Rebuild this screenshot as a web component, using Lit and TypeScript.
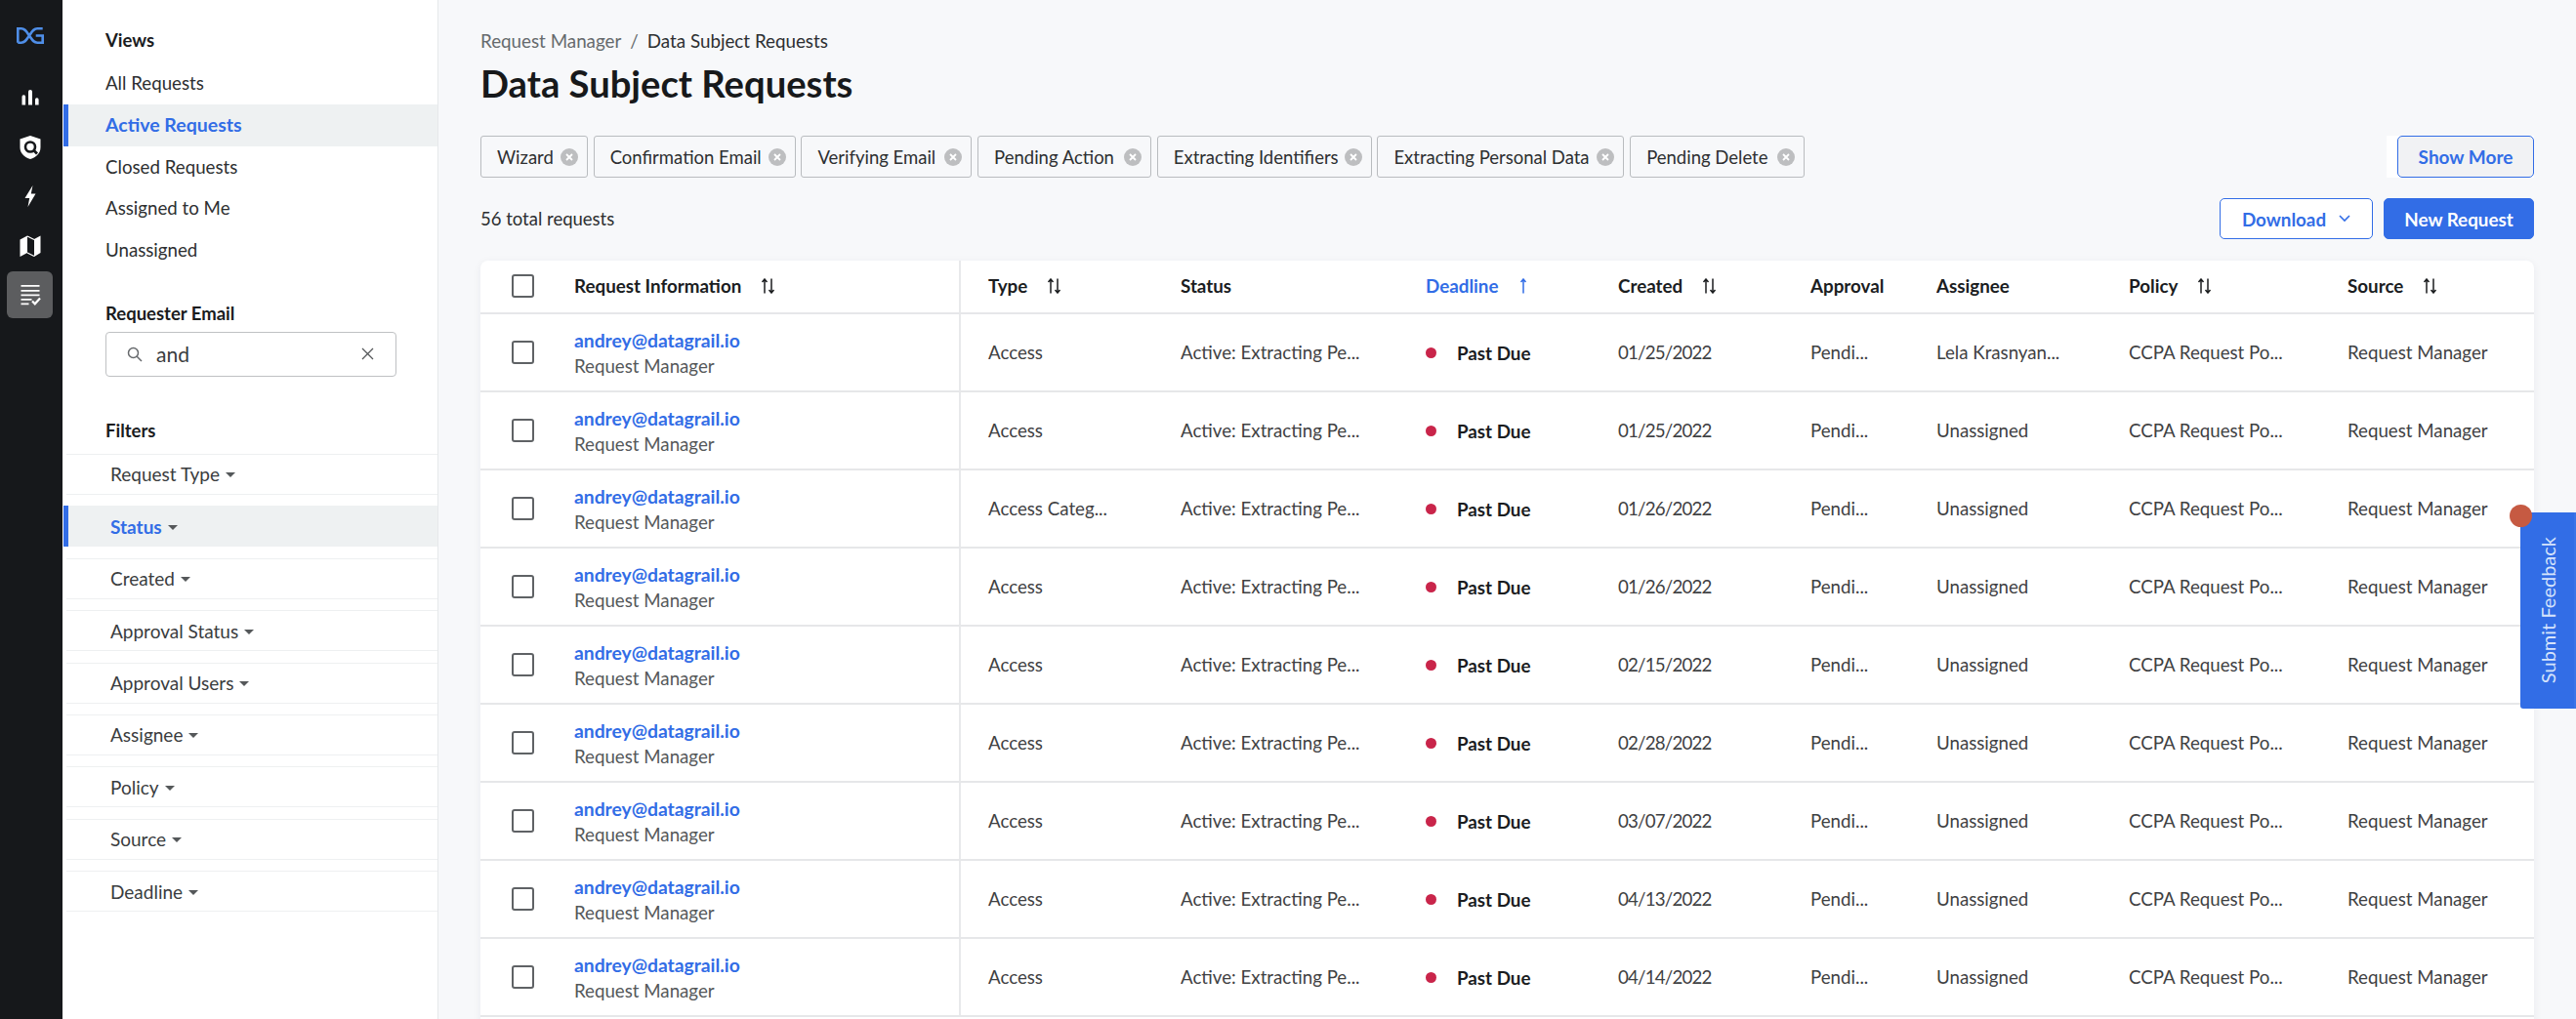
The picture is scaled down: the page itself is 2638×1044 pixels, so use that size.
import { LitElement, css, html, svg } from "lit";
import { customElement } from "lit/decorators.js";

const views = ["All Requests", "Active Requests", "Closed Requests", "Assigned to Me", "Unassigned"];
const filters = ["Request Type", "Status", "Created", "Approval Status", "Approval Users", "Assignee", "Policy", "Source", "Deadline"];
const chips = [
  ["Wizard", 110],
  ["Confirmation Email", 207],
  ["Verifying Email", 175],
  ["Pending Action", 178],
  ["Extracting Identifiers", 220],
  ["Extracting Personal Data", 253],
  ["Pending Delete", 179],
] as const;

const columns = [
  { label: "Request Information", sort: true, cls: "info" },
  { label: "Type", sort: true, cls: "type" },
  { label: "Status", sort: false, cls: "" },
  { label: "Deadline", sort: false, cls: "deadline" },
  { label: "Created", sort: true, cls: "" },
  { label: "Approval", sort: false, cls: "" },
  { label: "Assignee", sort: false, cls: "" },
  { label: "Policy", sort: true, cls: "" },
  { label: "Source", sort: true, cls: "" },
];

const rows = [
  { type: "Access", created: "01/25/2022", assignee: "Lela Krasnyan..." },
  { type: "Access", created: "01/25/2022", assignee: "Unassigned" },
  { type: "Access Categ...", created: "01/26/2022", assignee: "Unassigned" },
  { type: "Access", created: "01/26/2022", assignee: "Unassigned" },
  { type: "Access", created: "02/15/2022", assignee: "Unassigned" },
  { type: "Access", created: "02/28/2022", assignee: "Unassigned" },
  { type: "Access", created: "03/07/2022", assignee: "Unassigned" },
  { type: "Access", created: "04/13/2022", assignee: "Unassigned" },
  { type: "Access", created: "04/14/2022", assignee: "Unassigned" },
];

// all rail icons share a 24 box, centred on the rail
const railIcons = [
  svg`<path fill="#fff" d="M3.500 11a1.800 1.800 0 0 1 3.600 0v8.500H3.500zM10 6a2 2 0 0 1 4 0v13.500h-4zM17 14a1.800 1.800 0 0 1 3.600 0v5.500H17z"/>`,
  svg`<path fill="#fff" d="M12 0l10.500 3.500v8.500c0 6-4.500 10-10.500 12C6 22 1.500 18 1.500 12V3.500z"/><circle cx="12" cy="11.500" r="5" fill="none" stroke="#16181b" stroke-width="2.600"/><path d="M15.500 15l3.500 3.500" stroke="#16181b" stroke-width="2.800"/>`,
  svg`<path fill="#fff" d="M14.500 1L6.500 14h4.700L9.500 23l8-13.500h-4.700z"/>`,
  svg`<path fill="#fff" d="M1.500 5.500L9 1.500v17.500l-7.500 4zM16 5l6.500-3.500V19L16 23z"/><path fill="none" stroke="#fff" stroke-width="1.200" d="M9 2l7 3.500M9 19l7 3.500"/>`,
  svg`<path fill="#fff" d="M2.500 2h19v1.800h-19zM2.500 7h19v1.800h-19zM2.500 11.500h19v1.800h-19zM2.500 16h11v1.800h-11zM2.500 20.400h8v1.800h-8z"/><path fill="none" stroke="#fff" stroke-width="2.200" d="M14 18.500l2.800 2.800 5.200-5.800"/>`,
];

const sortIcon = html`<svg class="sort" width="15" height="16" viewBox="0 0 15 16"><path d="M4 15.500V1M1.500 4L4 1l2.500 3M11 .5V15M8.500 12l2.500 3 2.500-3" fill="none" stroke="currentColor" stroke-width="1.500"/></svg>`;
const upIcon = html`<svg class="sort up" width="8" height="16" viewBox="0 0 8 16"><path d="M4 15.500V1M1.500 4L4 1l2.500 3" fill="none" stroke="currentColor" stroke-width="1.500"/></svg>`;
const caret = html`<svg class="caret" width="10" height="5" viewBox="0 0 10 5"><path d="M0 0h10L5 5z" fill="currentColor"/></svg>`;

@customElement("app-root")
export class AppRoot extends LitElement {
  static styles = css`
    :host {
      display: block;
      position: relative;
      height: 100vh;
      overflow: hidden;
      font-family: "Lato", "Liberation Sans", sans-serif;
      font-size: 18px;
      color: #2d2f31;
      background: #f7f8fa;
    }
    * { box-sizing: border-box; }
    .page { display: flex; height: 100%; }

    .rail {
      flex: 0 0 64px;
      background: #16181b;
      padding: 12px 3px 0 0;
      display: flex;
      flex-direction: column;
      align-items: center;
    }
    .logo { height: 48px; margin-bottom: 15px; display: flex; align-items: center; }
    .rail-item { width: 47px; height: 50.500px; display: flex; align-items: center; justify-content: center; }
    .rail-item.on { height: 48px; margin-top: 1px; background: #5c5d5f; border-radius: 6px; }

    .side {
      flex: 0 0 385px;
      background: #fff;
      border-right: 1px solid #e6e8eb;
      padding-top: 29px;
    }
    .side-title { height: 24px; line-height: 24px; margin-left: 44px; font-weight: 700; color: #1a1c1e; font-size: 18.500px; }
    .views { margin-top: 11px; }
    .view { height: 42.800px; line-height: 42.800px; padding-left: 43px; font-size: 18.700px; margin-left: 1px; }
    .view.on, .filter.on {
      background: #eef1f2;
      color: #326de6;
      font-weight: 700;
      border-left: 5px solid #326de6;
    }
    .view.on { padding-left: 38px; font-size: 19.500px; }
    .email-title { margin-top: 31px; }
    .search {
      margin: 7px 0 0 44px;
      width: 298px;
      height: 46px;
      background: #fff;
      border: 1px solid #bfc1c3;
      border-radius: 4px;
      display: flex;
      align-items: center;
      padding: 0 22px 0 21px;
      font-size: 21px;
      color: #3a3c3e;
    }
    .search span { flex: 1; margin-left: 14px; }
    .filters-title { margin-top: 43px; }
    .filters { margin-top: 12px; padding-left: 4px; }
    .filter {
      height: 42px;
      margin-bottom: 11.400px;
      border-top: 1px solid #eef0f1;
      border-bottom: 1px solid #eef0f1;
      padding-left: 45px;
      display: flex;
      align-items: center;
      gap: 6px;
      font-size: 19px;
      color: #3a3c3e;
    }
    .filter.on { border-top: 0; border-bottom: 0; margin-left: -3px; padding-left: 43px; }
    .caret { color: #55585a; margin-top: 2px; }

    .main { flex: 1; min-width: 0; padding: 30px 43px 0 43px; }
    .crumbs { height: 24px; line-height: 24px; font-size: 18.800px; color: #666a6d; }
    .crumbs i { font-style: normal; margin: 0 9px; }
    .crumbs b { font-weight: 400; color: #2d2f31; }
    h1 { margin: 7px 0 0; height: 48px; line-height: 48px; font-size: 38.200px; font-weight: 700; color: #17191b; }

    .chips-row { margin-top: 30px; height: 43px; display: flex; justify-content: space-between; }
    .chips { display: flex; gap: 5.700px; }
    .chip {
      height: 43px;
      border: 1px solid #b9bcbf;
      border-radius: 3px;
      padding: 0 9px 0 16px;
      display: flex;
      align-items: center;
      justify-content: space-between;
      font-size: 18.500px;
    }
    .more-wrap { background: #fff; padding-left: 11px; }
    .btn {
      height: 42px;
      border: 1px solid #326de6;
      border-radius: 5px;
      color: #326de6;
      font-weight: 700;
      font-size: 18.800px;
      display: flex;
      align-items: center;
      justify-content: center;
      gap: 13px;
      background: #fff;
    }
    .btn.more { width: 140px; height: 43px; background: #f1f2f4; font-size: 19px; }
    .btn.download { width: 157px; }
    .btn.primary { width: 154px; background: #326de6; color: #fff; }

    .toolbar { margin-top: 21px; height: 42px; display: flex; align-items: center; gap: 11px; }
    .total { flex: 1; font-size: 18.500px; }

    .table {
      margin-top: 22px;
      padding-bottom: 40px;
      background: #fff;
      border-radius: 8px 8px 0 0;
      box-shadow: 0 2px 10px rgba(30, 40, 60, .06);
    }
    .tr {
      display: grid;
      grid-template-columns: 96px 394px 227px 251px 197px 197px 129px 197px 224px 191px;
      height: 80px;
      align-items: center;
      border-bottom: 2px solid #e6e7e9;
      font-size: 18.700px;
      color: #3f4143;
    }
    .tr.head { height: 55px; font-weight: 700; font-size: 18.800px; color: #1b1d1f; }
    .tr.head .td { padding-bottom: 2px; }
    .td { white-space: nowrap; overflow: hidden; display: flex; align-items: center; height: 100%; }
    .td.type { border-left: 2px solid #e8e9eb; padding-left: 28px; }
    .th-deadline { color: #326de6; }
    .sort { margin-left: 20px; flex: none; }
    .sort.up { margin-left: 22px; }
    .check { justify-content: flex-start; padding-left: 32px; }
    .box { width: 23px; height: 24px; border: 2px solid #5f6265; border-radius: 3px; background: #fff; }
    .info-cell { flex-direction: column; align-items: flex-start; justify-content: center; gap: 4px; }
    .email { color: #326de6; font-weight: 700; font-size: 19.300px; }
    .origin { color: #55585a; }
    .dot { width: 11px; height: 11px; border-radius: 50%; background: #c9254a; margin-right: 21px; }
    .due { font-weight: 700; font-size: 18.800px; color: #1b1d1f; }
    .date { letter-spacing: -.8px; }

    .feedback {
      position: absolute;
      left: 2581px;
      top: 525px;
      width: 57px;
      height: 201px;
      background: #326de6;
      border-right: 2px solid #3a74e8;
      border-radius: 3px 0 0 3px;
      color: #d5e3fb;
      font-size: 20px;
      writing-mode: vertical-rl;
      display: flex;
      align-items: center;
      justify-content: center;
    }
    .feedback span { transform: rotate(180deg); }
    .pin {
      position: absolute;
      left: 2570px;
      top: 517px;
      width: 23px;
      height: 23px;
      border-radius: 50%;
      background: #c65a42;
    }
  `;

  render() {
    return html`
      <div class="page">
        <nav class="rail">
          <div class="logo">
            <svg width="28" height="17" viewBox="0 0 28 17" fill="none" stroke="#4f8ee8" stroke-width="2.600"><path d="M1.300 15.700V1.300h3.500c4 0 5.200 3 8.200 7.200s4.200 7.200 8.200 7.200h5.500V8.500h-7M1.300 15.700h3.500c4 0 5.200-3 8.200-7.200s4.200-7.200 8.200-7.200h5.500"/></svg>
          </div>
          ${railIcons.map((icon, i) => html`
            <div class="rail-item ${i === 4 ? "on" : ""}">
              <svg width="24" height="24" viewBox="0 0 24 24">${icon}</svg>
            </div>
          `)}
        </nav>

        <aside class="side">
          <div class="side-title">Views</div>
          <div class="views">
            ${views.map((v, i) => html`<div class="view ${i === 1 ? "on" : ""}">${v}</div>`)}
          </div>
          <div class="side-title email-title">Requester Email</div>
          <div class="search">
            <svg width="16" height="16" viewBox="0 0 16 16" fill="none" stroke="#66696c" stroke-width="1.500"><circle cx="6.500" cy="6.500" r="5"/><path d="M10.200 10.200L15 15"/></svg>
            <span>and</span>
            <svg width="13" height="13" viewBox="0 0 13 13" fill="none" stroke="#55585a" stroke-width="1.300"><path d="M1 1l11 11M12 1L1 12"/></svg>
          </div>
          <div class="side-title filters-title">Filters</div>
          <div class="filters">
            ${filters.map((f, i) => html`<div class="filter ${i === 1 ? "on" : ""}">${f}${caret}</div>`)}
          </div>
        </aside>

        <main class="main">
          <div class="crumbs">Request Manager<i>/</i><b>Data Subject Requests</b></div>
          <h1>Data Subject Requests</h1>

          <div class="chips-row">
            <div class="chips">
              ${chips.map(([label, width]) => html`
                <div class="chip" style="width:${width}px">
                  ${label}
                  <svg width="18" height="18" viewBox="0 0 18 18"><circle cx="9" cy="9" r="9" fill="#bdbec0"/><path d="M6 6l6 6M12 6l-6 6" stroke="#fff" stroke-width="1.800"/></svg>
                </div>
              `)}
            </div>
            <div class="more-wrap"><div class="btn more">Show More</div></div>
          </div>

          <div class="toolbar">
            <div class="total">56 total requests</div>
            <div class="btn download">
              Download
              <svg width="12" height="8" viewBox="0 0 12 8" fill="none" stroke="#326de6" stroke-width="1.600"><path d="M1 1l5 5 5-5"/></svg>
            </div>
            <div class="btn primary">New Request</div>
          </div>

          <div class="table">
            <div class="tr head">
              <div class="td check"><div class="box"></div></div>
              ${columns.map((c) => html`
                <div class="td ${c.cls === "type" ? "type" : ""} ${c.cls === "deadline" ? "th-deadline" : ""}">
                  ${c.label}${c.sort ? sortIcon : ""}${c.cls === "deadline" ? upIcon : ""}
                </div>
              `)}
            </div>
            ${rows.map((r) => html`
              <div class="tr">
                <div class="td check"><div class="box"></div></div>
                <div class="td info-cell">
                  <div class="email">andrey@datagrail.io</div>
                  <div class="origin">Request Manager</div>
                </div>
                <div class="td type">${r.type}</div>
                <div class="td">Active: Extracting Pe...</div>
                <div class="td"><span class="dot"></span><span class="due">Past Due</span></div>
                <div class="td date">${r.created}</div>
                <div class="td">Pendi...</div>
                <div class="td">${r.assignee}</div>
                <div class="td">CCPA Request Po...</div>
                <div class="td">Request Manager</div>
              </div>
            `)}
          </div>
        </main>
      </div>
      <div class="feedback"><span>Submit Feedback</span></div>
      <div class="pin"></div>
    `;
  }
}
